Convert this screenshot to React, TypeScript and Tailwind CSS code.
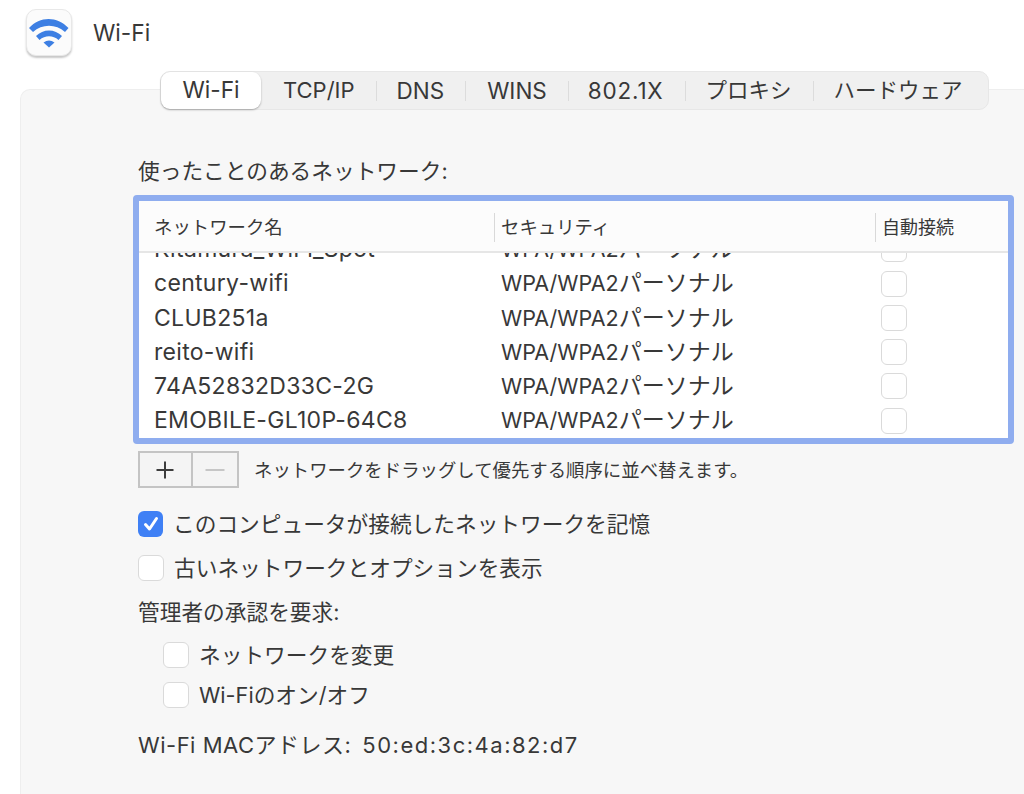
const font = { fontFamily: '"Inter","Noto Sans CJK JP","Liberation Sans",sans-serif' };

const tabs = [
  { t: "TCP/IP", c: "text-[22px] pl-[22px] pr-[21px]" },
  { t: "DNS", c: "text-[22.5px] pl-[20px] pr-[21px]" },
  { t: "WINS", c: "text-[22.5px] pl-[21px] pr-[21px]" },
  { t: "802.1X", c: "text-[22.5px] tracking-[0.8px] pl-[19px] pr-[21px]" },
  { t: "プロキシ", c: "text-[21.5px] pl-[20px] pr-[21px]" },
  { t: "ハードウェア", c: "text-[21.5px] pl-[20px] pr-[21px]" },
];
const rows = [
  "Kitamura_WiFi_Spot",
  "century-wifi",
  "CLUB251a",
  "reito-wifi",
  "74A52832D33C-2G",
  "EMOBILE-GL10P-64C8",
];

function WifiIcon() {
  return (
    <svg width="40" height="30" viewBox="0 0 40 30" fill="#3d7fe3">
      <path d="M0 10C11 -2 28 -2 39.5 10L36 14C27 5.5 13 5.5 4 14Z" />
      <path d="M7 18C14 10.5 26 10.5 33 18L29.5 22C24 17 16 17 10.5 22Z" />
      <path d="M14.5 24.5Q20 20.5 25.5 24.5L20 29.5Z" />
    </svg>
  );
}

function Box({ checked = false }: { checked?: boolean }) {
  if (checked) {
    return (
      <span className="w-[25px] h-[26px] shrink-0 rounded-[6px] bg-[#3f80f5] flex items-center justify-center">
        <svg width="18" height="18" viewBox="0 0 18 18" fill="none">
          <path d="M3.5 9.5L7.5 14L14.5 3.5" stroke="white" strokeWidth="3" strokeLinecap="round" strokeLinejoin="round" />
        </svg>
      </span>
    );
  }
  return <span className="w-[26px] h-[26px] shrink-0 block rounded-[6px] bg-white border-[1.5px] border-[#dadada]" />;
}

function Check({ label, checked, className }: { label: string; checked?: boolean; className?: string }) {
  return (
    <div className={`flex items-center gap-[10px] text-[21.7px] leading-[26px] text-[#383838] ${className ?? ""}`}>
      <Box checked={checked} />
      <span>{label}</span>
    </div>
  );
}

export default function App() {
  return (
    <div style={font} className="w-[1024px] h-[794px] bg-white overflow-hidden text-[#383838]">
      <header className="h-[71px] flex items-start pl-[26px] pt-[9px] gap-[21px]">
        <div className="w-[46px] h-[47px] rounded-[10px] bg-[#fbfbfb] border border-[#e8e8e8] shadow-[0_2px_2px_rgba(0,0,0,0.22)] flex items-center justify-center">
          <WifiIcon />
        </div>
        <span className="text-[22.7px] leading-[48px]">Wi-Fi</span>
      </header>

      <div className="relative z-10 ml-[160px] w-[829px] h-[39px] -mb-[21px] rounded-[10px] bg-[#f0f0f0] border border-[#e7e7e7] flex items-center">
        <div className="w-[100px] h-[37px] rounded-[9px] bg-white shadow-[0_1px_2px_rgba(0,0,0,0.3)] flex items-center justify-center text-[22.7px]">
          Wi-Fi
        </div>
        {tabs.map((x, i) => (
          <div key={x.t} className="flex items-center">
            {i > 0 && <span className="w-[1px] h-[20px] bg-[#dcdcdc]" />}
            <span className={x.c}>{x.t}</span>
          </div>
        ))}
      </div>

      <main className="ml-[20px] h-[705px] rounded-tl-[10px] bg-[#f7f7f7] border-t border-l border-[#eeeeee] pl-[112px] pt-[68px]">
        <p className="pl-[5px] text-[21.7px] leading-[26px] h-[37px]">使ったことのあるネットワーク:</p>

        <div className="w-[881px] h-[249px] border-[6px] border-[#8fadef] rounded-[4px] bg-white overflow-hidden">
          <div className="relative z-10 h-[52px] pt-[3px] grid grid-cols-[355px_381px_1fr] items-center bg-[#fcfcfc] border-b-2 border-[#e6e6e6] text-[18.4px]">
            <span className="pl-[15px]">ネットワーク名</span>
            <span className="pl-[6px] h-[29px] leading-[29px] border-l border-[#d9d9d9]">セキュリティ</span>
            <span className="pl-[6px] h-[29px] leading-[29px] border-l border-[#d9d9d9] text-[18px]">自動接続</span>
          </div>
          <div className="-mt-[21px]">
            {rows.map((r) => (
              <div key={r} className="h-[34.3px] grid grid-cols-[355px_381px_1fr] items-center">
                <span className="pl-[15px] whitespace-nowrap text-[23px] tracking-[0.3px]">{r}</span>
                <span className="pl-[7px] whitespace-nowrap text-[21.5px]">
                  WPA/WPA2<span className="text-[23px]">パーソナル</span>
                </span>
                <span className="pl-[6px]">
                  <Box />
                </span>
              </div>
            ))}
          </div>
        </div>

        <div className="pl-[5px] mt-[7px] flex items-center gap-[15px]">
          <div className="flex w-[101px] h-[37px] border-2 border-[#c4c4c4] bg-[#f4f4f4]">
            <span className="w-[53px] h-full pr-[2px] border-r-2 border-[#c4c4c4] flex items-center justify-center">
              <svg width="20" height="20" viewBox="0 0 20 20" fill="none">
                <path d="M10 1.5V18.5M1.5 10H18.5" stroke="#3c3c3c" strokeWidth="2" />
              </svg>
            </span>
            <span className="flex-1 flex items-center justify-center">
              <svg width="20" height="4" viewBox="0 0 20 4" fill="none">
                <path d="M0.5 2H19.5" stroke="#c6c6c6" strokeWidth="2" />
              </svg>
            </span>
          </div>
          <span className="text-[18.4px] leading-[24px] mt-[1px]">ネットワークをドラッグして優先する順序に並べ替えます。</span>
        </div>

        <Check className="pl-[5px] mt-[23px]" checked label="このコンピュータが接続したネットワークを記憶" />
        <Check className="pl-[5px] mt-[18px]" label="古いネットワークとオプションを表示" />
        <p className="pl-[5px] mt-[18px] text-[21.7px] leading-[26px]">管理者の承認を要求:</p>
        <Check className="pl-[30px] mt-[17px]" label="ネットワークを変更" />
        <Check className="pl-[30px] mt-[14px]" label="Wi-Fiのオン/オフ" />
        <p className="pl-[5px] mt-[24px] text-[22px] leading-[26px] whitespace-nowrap flex">
          <span className="tracking-[0.5px]">Wi-Fi MACアドレス:</span>
          <span className="ml-[11px] tracking-[1.5px]">50:ed:3c:4a:82:d7</span>
        </p>
      </main>
    </div>
  );
}
